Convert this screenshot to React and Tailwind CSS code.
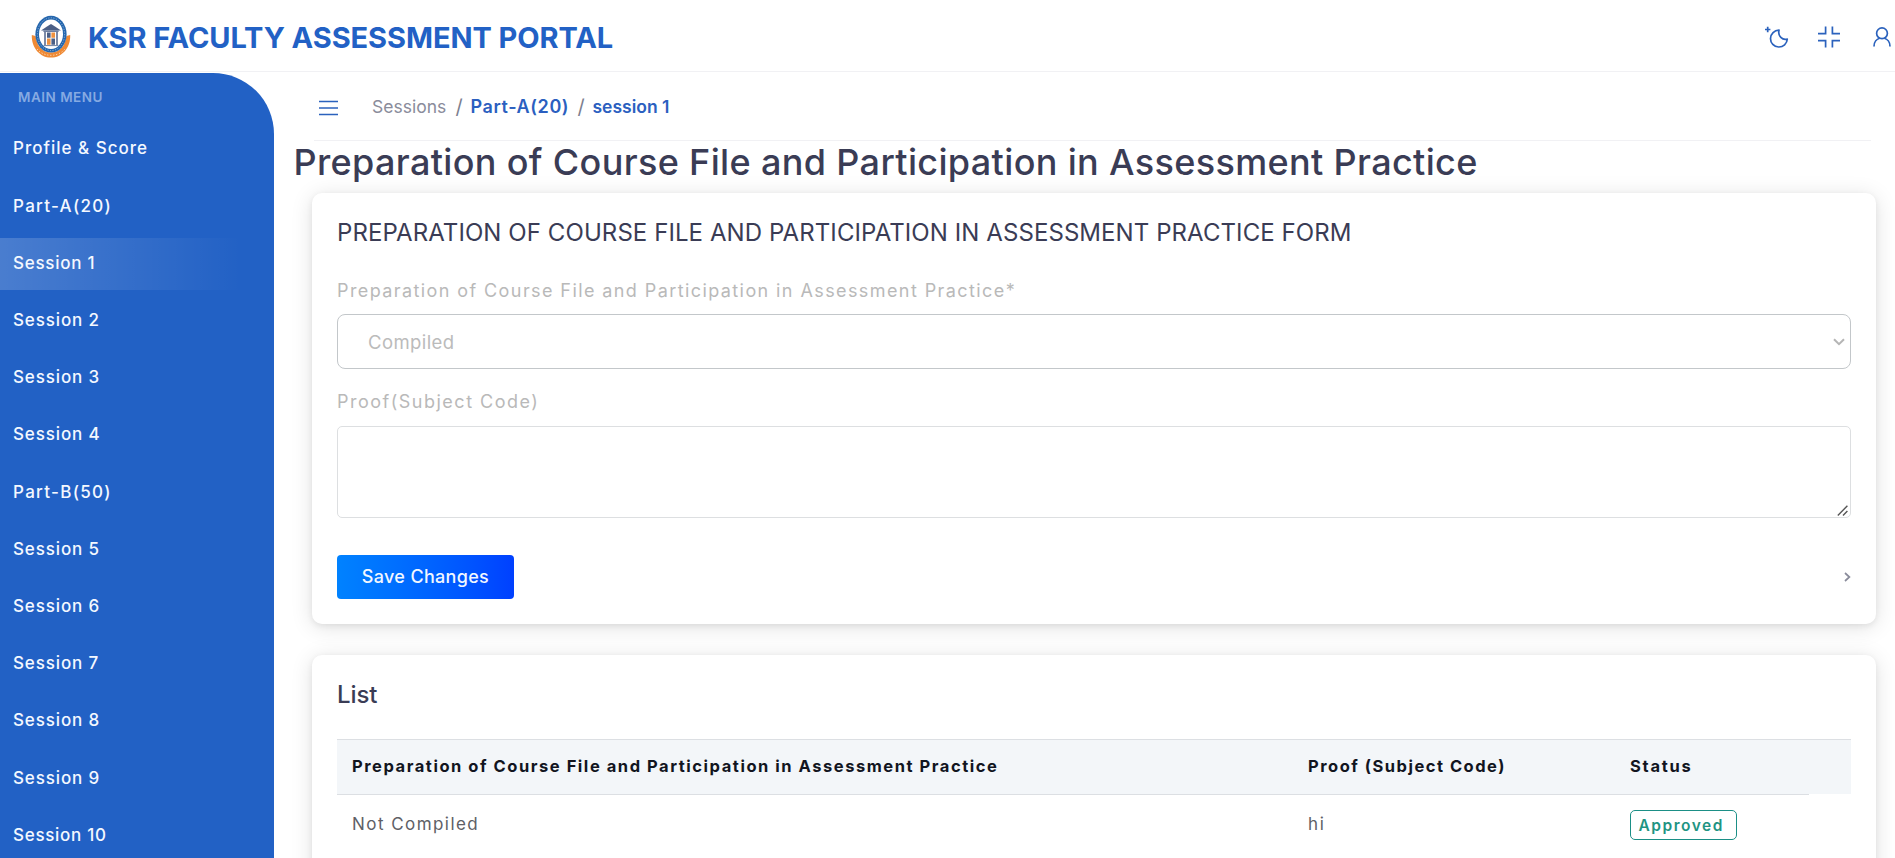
const menu = [
  { label: 'Profile & Score', cls: 'tracking-[1px]' },
  { label: 'Part-A(20)', cls: 'tracking-[1.3px]' },
  { label: 'Session 1', cls: 'tracking-[0.74px]', active: true },
  { label: 'Session 2', cls: 'tracking-[0.87px]' },
  { label: 'Session 3', cls: 'tracking-[0.87px]' },
  { label: 'Session 4', cls: 'tracking-[0.87px]' },
  { label: 'Part-B(50)', cls: 'tracking-[1.3px]' },
  { label: 'Session 5', cls: 'tracking-[0.87px]' },
  { label: 'Session 6', cls: 'tracking-[0.87px]' },
  { label: 'Session 7', cls: 'tracking-[0.87px]' },
  { label: 'Session 8', cls: 'tracking-[0.87px]' },
  { label: 'Session 9', cls: 'tracking-[0.87px]' },
  { label: 'Session 10', cls: 'tracking-[0.71px]' },
];

function Logo() {
  return (
    <svg width="40" height="44" viewBox="0 0 40 44" className="shrink-0">
      <path d="M.8 20 L4.6 21 C5.6 31 12 37.6 20 37.6 C28 37.6 34.4 31 35.4 21 L39.2 20 C39.6 33 31 42.6 20 42.6 C9 42.6 .4 33 .8 20Z" fill="#ef8a35" />
      <path d="M6 34 C13 42.4 27 42.4 34 34" fill="none" stroke="#fbd9b8" strokeWidth="1" strokeDasharray="1.2 1.8" />
      <ellipse cx="20" cy="19.2" rx="15.6" ry="18.4" fill="#2566ad" />
      <ellipse cx="20" cy="19.2" rx="13.6" ry="16.4" fill="none" stroke="#a9c8e6" strokeWidth=".8" strokeDasharray="1.1 1.5" />
      <ellipse cx="20" cy="19.2" rx="12" ry="14.8" fill="#fff" />
      <path d="M20 9 L24 11.6 L30 15.6 H10 L16 11.6Z" fill="#4b5f86" />
      <path d="M12.4 15.4 H27.6 V17 H12.4Z" fill="#6e7fa0" />
      <path d="M13 17 H15 V30 H13Z M25 17 H27 V30 H25Z" fill="#7d8ba8" />
      <path d="M16 17.6 H19.6 V22.8 H16Z M20.4 23.6 H24 V29.8 H20.4Z" fill="#4b5f86" />
      <path d="M20.4 17.6 H24 V22.8 H20.4Z M16 23.6 H19.6 V29.8 H16Z" fill="#f0923f" />
      <path d="M12.6 30.6 H27.4" stroke="#6e7fa0" strokeWidth="1" />
    </svg>
  );
}

function MoonIcon() {
  return (
    <svg width="26" height="24" viewBox="0 0 26 24" fill="none" stroke="#2b62bd" strokeWidth="1.7" strokeLinejoin="round" className="shrink-0">
      <path d="M4.7 1.8V7.2M2 4.5H7.4" />
      <path d="M16 5.2 A8.4 8.4 0 1 0 24.3 14 C19.5 15.4 14.6 11.2 16 5.2Z" />
    </svg>
  );
}

function CompressIcon() {
  return (
    <svg width="22" height="22" viewBox="0 0 22 22" fill="none" stroke="#2b62bd" strokeWidth="1.7" className="shrink-0">
      <path d="M0 7.7H7.6V.4M22 7.7H14.4V.4M0 14.6H7.6V21.6M22 14.6H14.4V21.6" />
    </svg>
  );
}

function UserIcon() {
  return (
    <svg width="18" height="20" viewBox="0 0 18 20" fill="none" stroke="#2b62bd" strokeWidth="1.7" className="shrink-0">
      <circle cx="9" cy="6.3" r="5.4" />
      <path d="M1 19.4C1 15.2 3.6 12 6.6 11.2M17 19.4C17 15.2 14.4 12 11.4 11.2" />
    </svg>
  );
}

function Header() {
  return (
    <header className="flex h-[72px] shrink-0 items-center border-b border-[#f1f1f4] pl-[31px] pr-[4px] pt-[3px]">
      <Logo />
      <h1 className="ml-[17px] grow whitespace-nowrap text-[29px] font-bold leading-none tracking-[-0.07px] text-[#2261c5]">
        KSR FACULTY ASSESSMENT PORTAL
      </h1>
      <div className="flex items-center">
        <MoonIcon />
        <span className="w-[29px]" />
        <CompressIcon />
        <span className="w-[33px]" />
        <UserIcon />
      </div>
    </header>
  );
}

function Sidebar() {
  return (
    <nav className="mt-px w-[274px] shrink-0 overflow-hidden rounded-tr-[61px] bg-[#2261c5] text-white">
      <div className="flex h-[50.6px] items-center pb-[2px] pl-[18px] text-[13.5px] font-semibold leading-none tracking-[0.5px] text-[#86aae2]">
        MAIN MENU
      </div>
      {menu.map((m) => (
        <a
          key={m.label}
          className={
            'mb-[5px] flex h-[52.2px] items-center pb-[1.4px] pl-[13px] text-[17px] font-medium leading-none text-[#f4f8ff] ' +
            m.cls +
            (m.active ? ' bg-linear-to-r from-white/18 to-transparent to-88%' : '')
          }
        >
          {m.label}
        </a>
      ))}
    </nav>
  );
}

function Breadcrumb() {
  return (
    <div className="ml-[40px] mr-[24px] flex h-[69px] items-center border-b border-[#f1f1f4] pl-[5px] pt-[1px] text-[17.5px] leading-none">
      <svg width="19" height="16" viewBox="0 0 19 16" stroke="#2b62bd" strokeWidth="1.5" className="mt-[3px]">
        <path d="M0 1.5H19M0 8H19M0 14.5H19" />
      </svg>
      <span className="ml-[34px] w-[83.5px] text-[#8a8c9b]">Sessions</span>
      <span className="w-[15px] text-[20px] text-[#7d7f90]">/</span>
      <span className="w-[107px] text-[18px] font-semibold tracking-[0.6px] text-[#2b5fc0]">Part-A(20)</span>
      <span className="w-[15px] text-[20px] text-[#7d7f90]">/</span>
      <span className="font-semibold text-[#2b5fc0]">session 1</span>
    </div>
  );
}

const card = 'ml-[38px] mr-[19px] rounded-[10px] bg-white px-[25px] shadow-[0_2px_6px_rgba(0,0,0,0.07),0_3px_22px_rgba(0,0,0,0.12)]';

function FormCard() {
  return (
    <section className={card + ' flex h-[431px] flex-col'}>
      <h3 className="mt-[24px] h-[32px] whitespace-nowrap text-[24px] font-normal leading-[32px] tracking-[0.08px] text-[#3a3c55]">
        PREPARATION OF COURSE FILE AND PARTICIPATION IN ASSESSMENT PRACTICE FORM
      </h3>
      <label className="mt-[31px] h-[22px] whitespace-nowrap text-[18px] leading-[22px] tracking-[1.41px] text-[#b9b9b9]">
        Preparation of Course File and Participation in Assessment Practice*
      </label>
      <div className="mt-[12px] flex h-[55px] items-center justify-between rounded-[8px] border border-[#c3c7ca] pl-[30px] pr-[5px] pt-[2px] text-[18.5px] leading-none tracking-[0.41px] text-[#bbbbbb]">
        Compiled
        <svg width="12" height="8" viewBox="0 0 12 8" fill="none" stroke="#b5b5b5" strokeWidth="2" className="mb-[2px]">
          <path d="M1 1.2L6 6.2L11 1.2" />
        </svg>
      </div>
      <label className="mt-[22px] h-[22px] text-[18px] leading-[22px] tracking-[1.5px] text-[#b9b9b9]">Proof(Subject Code)</label>
      <div className="mt-[13px] flex h-[92px] items-end justify-end rounded-[5px] border border-[#dddfe1] pb-[1px] pr-[2px]">
        <svg width="11" height="11" viewBox="0 0 11 11" stroke="#555" strokeWidth="1.4">
          <path d="M.8 10.4L10.4 .8M6 10.4L10.4 6" />
        </svg>
      </div>
      <div className="mt-[37px] flex items-center justify-between">
        <button className="h-[44px] w-[177px] whitespace-nowrap rounded-[4px] bg-linear-to-r from-[#0082ff] to-[#0040ff] text-[18px] font-medium leading-none tracking-[0.32px] text-[#f2f7ff]">
          Save Changes
        </button>
        <svg width="7" height="10" viewBox="0 0 7 10" fill="none" stroke="#8a8c9b" strokeWidth="1.7">
          <path d="M1 1L5.4 5L1 9" />
        </svg>
      </div>
    </section>
  );
}

function ListCard() {
  return (
    <section className={card + ' mt-[31px] h-[240px]'}>
      <h3 className="h-[84px] pt-[24px] text-[24px] font-medium leading-[31px] tracking-[-0.1px] text-[#3a3c55]">List</h3>
      <div className="flex h-[55px] items-center border-t border-[#dcdfe3] bg-[#f3f6f9] pb-[1px] pl-[15px] text-[16.5px] font-bold leading-none text-[#12151f]">
        <span className="w-[956px] whitespace-nowrap tracking-[1.54px]">Preparation of Course File and Participation in Assessment Practice</span>
        <span className="w-[322px] whitespace-nowrap tracking-[1.5px]">Proof (Subject Code)</span>
        <span className="tracking-[1.75px]">Status</span>
      </div>
      <div className="mr-[42px] flex h-[60px] items-center border-t border-[#dcdfe3] pl-[15px] text-[17px] leading-none text-[#5e6066]">
        <span className="w-[956px] tracking-[1.45px]">Not Compiled</span>
        <span className="w-[322px] tracking-[1.6px]">hi</span>
        <span className="flex h-[30px] w-[107px] items-center rounded-[5px] border border-[#1b8f86] pl-[7.5px] pt-[2px] text-[15.5px] font-semibold tracking-[1.53px] text-[#1f9483]">
          Approved
        </span>
      </div>
    </section>
  );
}

export default function App() {
  return (
    <div className="flex h-screen w-full flex-col overflow-hidden bg-white font-['Inter',sans-serif]">
      <Header />
      <div className="flex min-h-0 grow">
        <Sidebar />
        <main className="min-w-0 grow overflow-hidden">
          <Breadcrumb />
          <h2 className="h-[52px] whitespace-nowrap pl-[19.5px] text-[36px] font-medium leading-[43px] tracking-[0.35px] text-[#3a3c55]">
            Preparation of Course File and Participation in Assessment Practice
          </h2>
          <FormCard />
          <ListCard />
        </main>
      </div>
    </div>
  );
}
